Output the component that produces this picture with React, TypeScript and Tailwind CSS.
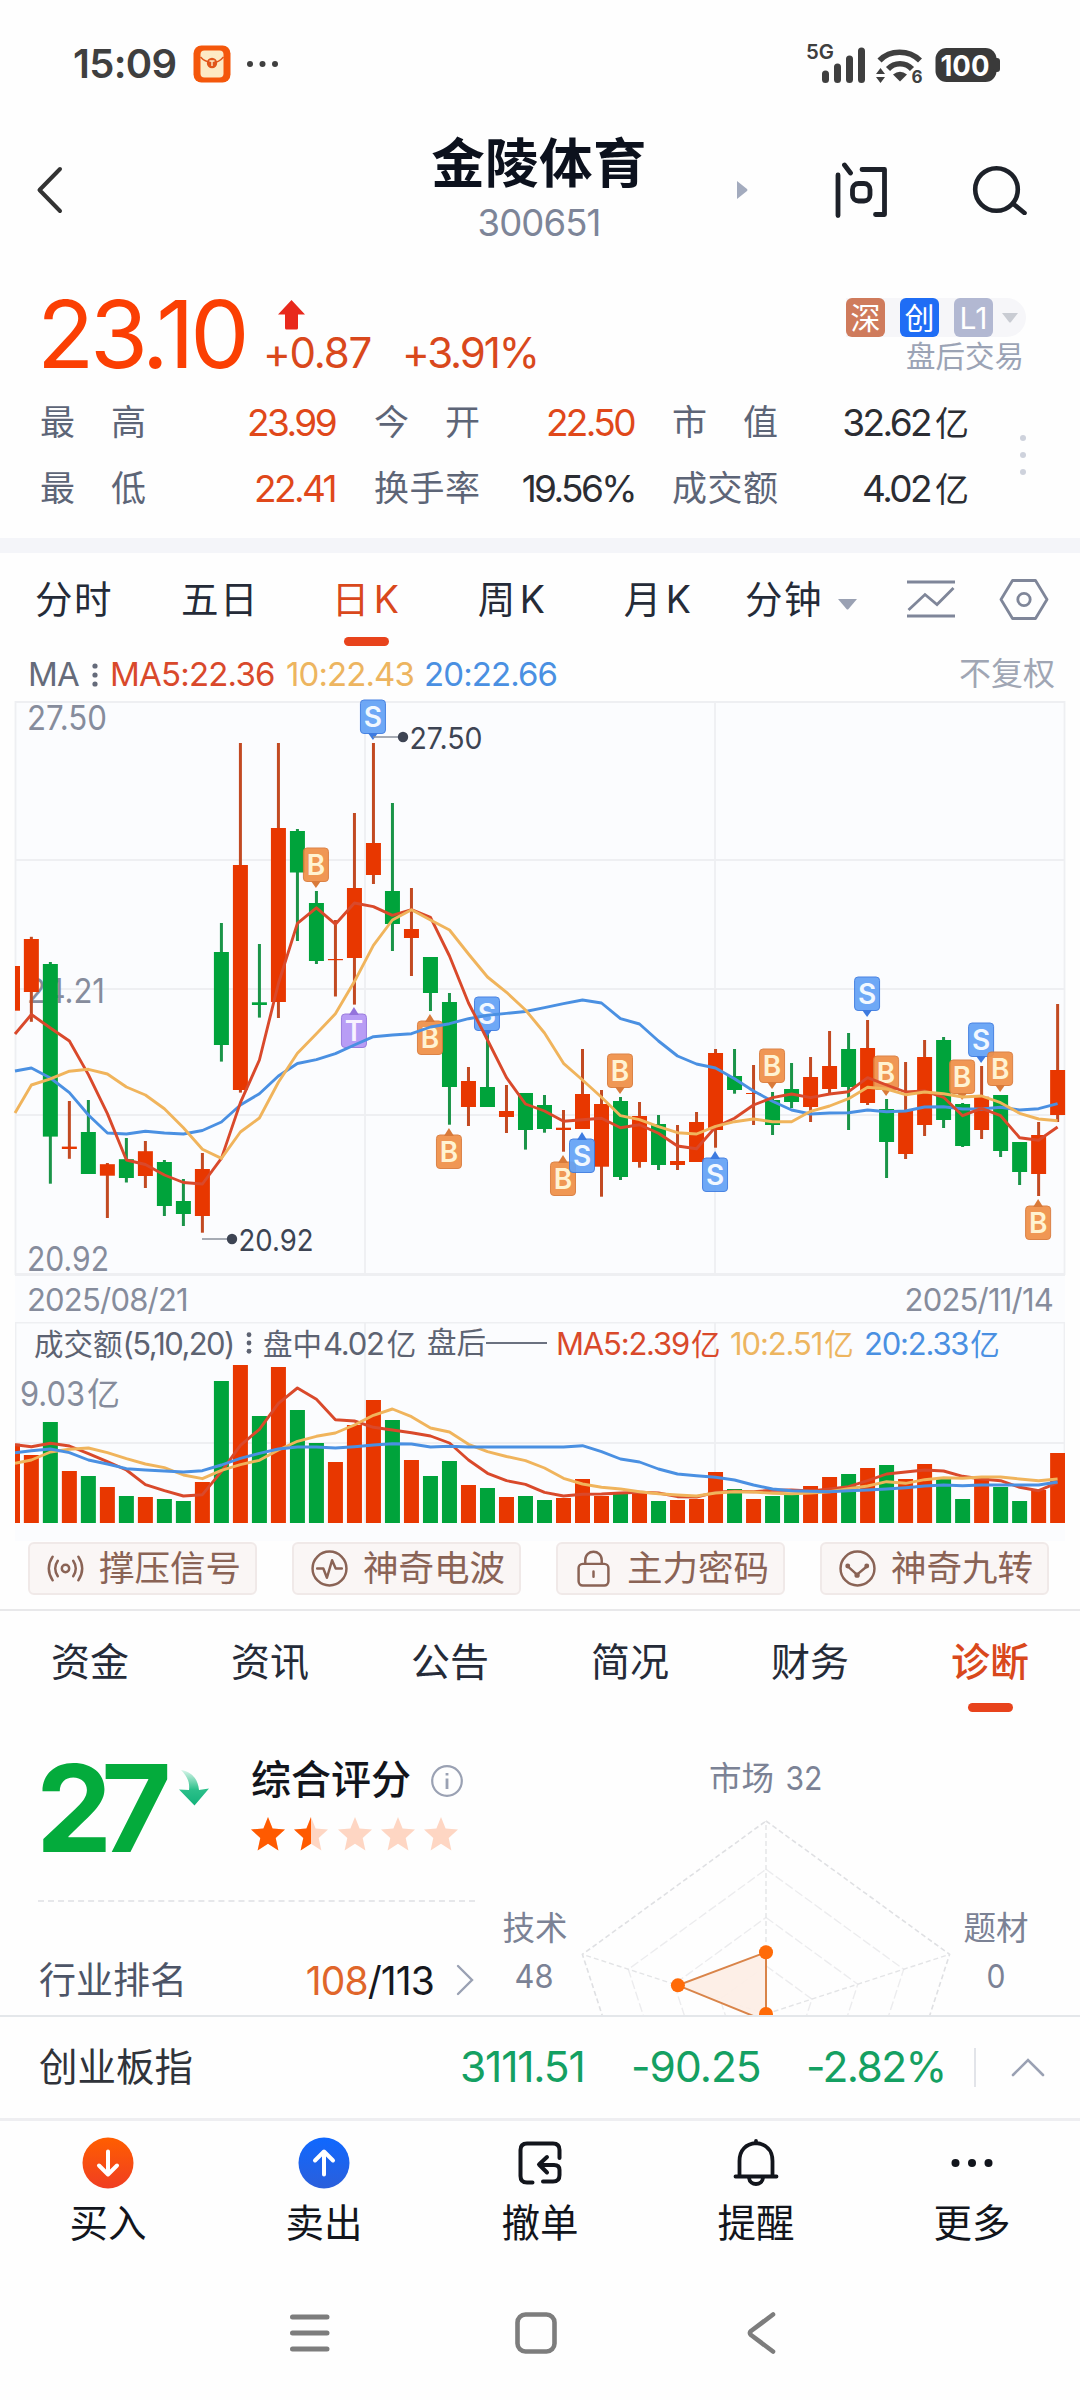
type Dir = 'up' | 'down';

interface Candle {
    dir: Dir;
    high: number;
    top: number;
    bottom: number;
    low: number;
    turnover: number;
}

interface Marker {
    index: number;
    tip: number;
    label: 'B' | 'S' | 'T';
    side: 'above' | 'below';
}

const RED = '#e83700';
const GREEN = '#00a33b';
const FONT = "Inter, 'Noto Sans CJK SC', sans-serif";
const STEP = 19.005;
const FIRST_X = 12.35;

const candleX = (i: number) => FIRST_X + STEP * i;

// direction, high, body top, body bottom, low, turnover bar top
const rows: [Dir, number, number, number, number, number][] = [
    ['up', 966, 966, 1010.7, 1010.7, 1443.7],
    ['up', 936.8, 939, 992, 1021.8, 1455],
    ['down', 962, 964, 1136.6, 1183.7, 1422],
    ['up', 1101, 1146.6, 1149, 1158.8, 1471],
    ['down', 1100, 1132, 1174, 1174, 1476],
    ['up', 1163, 1164.2, 1175.7, 1218, 1487],
    ['down', 1138, 1159.2, 1178, 1182.5, 1496],
    ['up', 1141, 1151.2, 1176, 1188, 1497],
    ['down', 1160, 1162, 1206, 1216, 1499],
    ['down', 1179, 1201, 1214, 1226, 1501],
    ['up', 1153, 1169, 1216, 1232.7, 1482],
    ['down', 923, 952, 1045, 1061.6, 1381],
    ['up', 743, 865, 1090, 1092.6, 1365],
    ['down', 944, 1002.3, 1005, 1017.6, 1416],
    ['up', 743, 828, 1002, 1018, 1367],
    ['down', 829, 831, 872.5, 941, 1410],
    ['down', 891, 903, 961, 964, 1443],
    ['up', 920, 959, 960.2, 996.5, 1462],
    ['up', 813, 888, 958, 1004.6, 1425],
    ['up', 743, 843, 875, 884, 1400],
    ['down', 803, 891, 924, 951, 1420],
    ['up', 888, 929, 938, 976, 1460],
    ['down', 957, 957, 993, 1011, 1476],
    ['down', 993, 1002, 1087, 1124.7, 1461],
    ['up', 1067, 1081, 1107, 1126, 1485],
    ['down', 1034, 1087, 1107, 1107, 1488],
    ['up', 1085, 1111, 1117, 1133, 1497],
    ['down', 1093, 1093, 1130, 1149.6, 1496],
    ['down', 1095, 1105, 1129, 1132.7, 1500],
    ['up', 1110, 1127.7, 1130, 1151.7, 1498],
    ['up', 1049, 1094, 1129, 1129, 1479],
    ['up', 1090, 1104, 1166.7, 1196.7, 1496],
    ['down', 1097, 1101, 1177, 1180, 1493],
    ['up', 1102, 1116, 1162, 1167.7, 1493],
    ['down', 1115, 1124, 1165, 1170, 1501],
    ['up', 1125, 1161, 1165, 1170, 1500],
    ['up', 1112, 1122, 1162, 1162, 1499],
    ['up', 1049, 1053, 1130, 1147.7, 1472],
    ['down', 1049, 1076, 1090, 1093.7, 1489],
    ['up', 1065, 1093, 1094, 1125, 1499],
    ['down', 1092, 1100, 1125, 1135, 1496],
    ['down', 1063, 1089, 1102, 1108, 1495],
    ['up', 1057, 1077, 1107, 1122, 1486],
    ['up', 1031, 1066, 1089, 1093, 1477],
    ['down', 1033, 1049, 1087, 1130, 1474],
    ['up', 1020, 1048, 1103, 1105, 1468],
    ['down', 1099, 1109, 1142, 1178, 1465],
    ['up', 1062, 1110.7, 1154, 1159, 1479],
    ['up', 1040, 1057, 1125, 1136, 1464],
    ['down', 1037, 1040, 1120, 1128, 1479],
    ['down', 1103, 1104, 1146, 1147, 1499],
    ['up', 1066, 1096.7, 1130, 1139, 1478],
    ['down', 1095, 1095, 1151, 1157, 1487],
    ['down', 1142, 1142, 1172, 1185, 1501],
    ['up', 1122, 1135, 1174, 1196, 1490],
    ['up', 1004, 1070, 1115, 1122, 1453],
];

const candles: Candle[] = rows.map(([dir, high, top, bottom, low, turnover]) => ({ dir, high, top, bottom, low, turnover }));

const priceMa = [
    {
        color: '#4a90e2',
        values: [1071, 1068, 1078, 1092.6, 1115, 1133, 1134, 1131.3, 1133, 1134, 1130.5, 1122, 1105, 1093.7, 1076, 1063.5, 1059.7, 1053.6, 1045, 1036.7, 1035, 1033.7, 1027, 1023.7, 1018.7, 1015.3, 1013.4, 1011.5, 1007.7, 1003.7, 1000, 1003, 1018.7, 1024, 1041, 1056, 1064, 1068, 1078.7, 1091, 1101.3, 1110, 1114, 1113, 1112.7, 1110, 1111.7, 1111, 1107, 1106.7, 1109, 1109, 1107.3, 1110, 1108.7, 1103.7],
    },
    {
        color: '#d9492b',
        values: [1034, 1014.5, 1028, 1041, 1074.6, 1113.6, 1160, 1164.5, 1175, 1182.5, 1184, 1158.4, 1102.6, 1060, 983.5, 923.4, 907.8, 924.2, 903, 906.6, 915.4, 909.7, 917.3, 956, 1003, 1040, 1077.7, 1104, 1111, 1121.3, 1119.7, 1118.3, 1127.7, 1124.7, 1133.3, 1146, 1148.7, 1127, 1118.3, 1105, 1097.7, 1094, 1097.7, 1094, 1091.7, 1077.7, 1085, 1092, 1091, 1097.3, 1115.7, 1108.3, 1115.7, 1137.7, 1140.3, 1127],
    },
    {
        color: '#f0b45c',
        values: [1113, 1085, 1078.8, 1071.2, 1069.3, 1074, 1087, 1095, 1108.7, 1127.8, 1149.3, 1158.4, 1132, 1118, 1082.3, 1053.2, 1033.7, 1013.8, 981.6, 945.3, 920, 909.7, 920, 930, 954, 977, 992.3, 1010, 1033, 1063.3, 1080, 1097.3, 1115.7, 1119.7, 1126.7, 1132.7, 1134, 1126.3, 1121.7, 1119, 1121.7, 1121.7, 1111.3, 1106, 1098.7, 1087.3, 1089, 1094.7, 1092, 1093.7, 1097, 1096, 1102.7, 1113.3, 1119, 1120.7],
    },
];

const turnoverMa = [
    {
        color: '#d9492b',
        values: [1444.7, 1446.7, 1443.3, 1446, 1453.7, 1461.7, 1470, 1484.7, 1490.7, 1496, 1494.7, 1471.7, 1445.3, 1429.3, 1403.3, 1388, 1399.3, 1419.7, 1421, 1427.3, 1430, 1432.7, 1436, 1443, 1460, 1473.3, 1480.7, 1484.3, 1492.3, 1496, 1494.3, 1494, 1493, 1492.3, 1493, 1496.7, 1497, 1492.3, 1491.3, 1491.7, 1490.3, 1490, 1491, 1489, 1486.7, 1480.7, 1474, 1472, 1470, 1471, 1476.3, 1479, 1480.7, 1487.3, 1490.7, 1482.7],
    },
    {
        color: '#f0b45c',
        values: [1463.3, 1460, 1452, 1449.3, 1448, 1452.7, 1458.7, 1464, 1467.7, 1475, 1478.7, 1470.3, 1464.7, 1460.3, 1450, 1441.3, 1436.3, 1433, 1425, 1415.3, 1409, 1416.7, 1428, 1432, 1444.3, 1451.7, 1456.5, 1460.7, 1468, 1478.3, 1484, 1487.3, 1489, 1491.7, 1493.7, 1495, 1496, 1493, 1491.7, 1492, 1493.3, 1493.7, 1493, 1491.7, 1488.7, 1486, 1481.7, 1483.3, 1479.7, 1477.7, 1478.3, 1477, 1477, 1479, 1480.7, 1479],
    },
    {
        color: '#4a90e2',
        values: [1452.7, 1450.7, 1449, 1452.7, 1460, 1464, 1468.7, 1470, 1471, 1472, 1470.7, 1465, 1458.3, 1453.3, 1449, 1447, 1447, 1448, 1446.7, 1445, 1443.7, 1444, 1447, 1446.3, 1447, 1447, 1447, 1447, 1447, 1447, 1445.7, 1451.7, 1459, 1462, 1469, 1474, 1475.7, 1477.3, 1480, 1485, 1489, 1490.7, 1491.3, 1491.7, 1490.7, 1490, 1489, 1487.7, 1486, 1485, 1485.7, 1485, 1485, 1485, 1485, 1482],
    },
];

const markers: Marker[] = [
    { index: 16, tip: 888, label: 'B', side: 'above' },
    { index: 18, tip: 1007, label: 'T', side: 'below' },
    { index: 19, tip: 740, label: 'S', side: 'above' },
    { index: 22, tip: 1014, label: 'B', side: 'below' },
    { index: 23, tip: 1128, label: 'B', side: 'below' },
    { index: 25, tip: 1037, label: 'S', side: 'above' },
    { index: 29, tip: 1155, label: 'B', side: 'below' },
    { index: 30, tip: 1132, label: 'S', side: 'below' },
    { index: 32, tip: 1094, label: 'B', side: 'above' },
    { index: 37, tip: 1151, label: 'S', side: 'below' },
    { index: 40, tip: 1089, label: 'B', side: 'above' },
    { index: 45, tip: 1017, label: 'S', side: 'above' },
    { index: 46, tip: 1096, label: 'B', side: 'above' },
    { index: 50, tip: 1100, label: 'B', side: 'above' },
    { index: 51, tip: 1063, label: 'S', side: 'above' },
    { index: 52, tip: 1092, label: 'B', side: 'above' },
    { index: 54, tip: 1199, label: 'B', side: 'below' },
];

const markerColors = {
    B: { fill: '#f09048', stroke: '#d97a3a', text: '#fff3d2' },
    S: { fill: '#64a2f6', stroke: '#3d7be0', text: '#f2f8ff' },
    T: { fill: '#b496f5', stroke: '#9473dc', text: '#f7f2ff' },
};

function MarkerTag({ index, tip, label, side }: Marker) {
    const x = candleX(index) - 0.5;
    const { fill, stroke, text } = markerColors[label];
    const top = side === 'above' ? tip - 40 : tip + 7;
    const base = side === 'above' ? tip - 7 : tip + 8;
    return (
        <g>
            <rect x={x - 12.5} y={top} width={25} height={33.5} rx={3.5} fill={fill} stroke={stroke} strokeWidth={1} opacity={0.93} />
            <path d={`M${x - 5} ${base}L${x} ${tip}L${x + 5} ${base}Z`} fill={stroke} />
            <text x={x} y={top + 26.5} textAnchor="middle" fontFamily={FONT} fontSize={28} fontWeight={600} fill={text}>{label}</text>
        </g>
    );
}

function MaLine({ color, values }: { color: string; values: number[] }) {
    const points = values.map((y, i) => `${Math.max(15, candleX(i)).toFixed(1)},${y}`).join(' ');
    return <polyline points={points} fill="none" stroke={color} strokeWidth={2.9} strokeLinejoin="round" />;
}

function ChartText({ x, y, size, width, fill, children }: { x: number; y: number; size: number; width: number; fill: string; children: string }) {
    return (
        <text x={x} y={y} fontFamily={FONT} fontSize={size} fill={fill} textLength={width} lengthAdjust="spacingAndGlyphs">{children}</text>
    );
}

function PriceChart() {
    return (
        <svg className="block w-[1050px] h-[574px] overflow-visible" viewBox="15 701 1050 574">
            <rect x={15} y={701} width={1050} height={574} fill="#fbfcfe" />
            <path d="M15 702H1065M15 860H1065M15 989H1065M15 1115H1065M15 1274H1065M365 701V1275M715 701V1275M15.5 701V1275M1064.5 701V1275" stroke="#eeeff2" strokeWidth={1.8} />
            <ChartText x={27} y={730} size={34} width={80} fill="#868c9c">27.50</ChartText>
            <ChartText x={27} y={1003} size={34} width={78} fill="#868c9c">24.21</ChartText>
            <ChartText x={27} y={1271} size={34} width={82} fill="#868c9c">20.92</ChartText>
            {candles.map((c, i) => {
                const x = candleX(i);
                const color = c.dir === 'up' ? RED : GREEN;
                return (
                    <g key={i}>
                        {i > 0 && <rect x={x - 1.5} y={c.high} width={3} height={c.low - c.high} fill={c.dir === 'up' ? '#c24a22' : '#1a9448'} />}
                        <rect x={i > 0 ? x - 7.5 : 15} y={c.top} width={i > 0 ? 15 : 5} height={c.bottom - c.top} fill={color} />
                    </g>
                );
            })}
            {markers.map((m) => <MarkerTag key={m.index} {...m} />)}
            {priceMa.map((line) => <MaLine key={line.color} {...line} />)}
            <path d="M373 737H403M202 1239H232" stroke="#8b909c" strokeWidth={1.6} />
            <circle cx={403} cy={737} r={5.2} fill="#3d4453" />
            <circle cx={232} cy={1239} r={5.2} fill="#3d4453" />
            <ChartText x={409.5} y={748.5} size={30} width={73} fill="#3d4453">27.50</ChartText>
            <ChartText x={238.5} y={1250.5} size={30} width={75} fill="#3d4453">20.92</ChartText>
        </svg>
    );
}

function TurnoverChart() {
    return (
        <svg className="block w-[1050px] h-[219px]" viewBox="15 1322 1050 219">
            <rect x={15} y={1322} width={1050} height={219} fill="#fbfcfe" />
            <path d="M15 1322.5H1065M15 1443H1065M365 1322V1523M715 1322V1523M15.5 1322V1523M1064.5 1322V1523" stroke="#eeeff2" strokeWidth={1.8} />
            <ChartText x={20} y={1405.5} size={34} width={65} fill="#868c9c">9.03</ChartText>
            <ChartText x={87} y={1406} size={33} width={33} fill="#868c9c">亿</ChartText>
            {candles.map((c, i) => (
                <rect key={i} x={i > 0 ? candleX(i) - 7.5 : 15} y={c.turnover} width={i > 0 ? 15 : 5} height={1523 - c.turnover} fill={c.dir === 'up' ? RED : GREEN} />
            ))}
            {turnoverMa.map((line) => <MaLine key={line.color} {...line} />)}
        </svg>
    );
}

function StatusBar() {
    return (
        <div className="flex h-[127px] items-center pl-[73px] pr-[80px] text-[#3f3f3f]">
            <span className="w-[120px] text-[40px] font-semibold leading-none tracking-[-0.7px]">15:09</span>
            <svg className="h-[38px] w-[38px]" viewBox="0 0 38 38">
                <rect x="0.5" y="0.5" width="37" height="37" rx="8" fill="#f4570b" />
                <rect x="7.5" y="5.5" width="23" height="27" rx="4" fill="#fdeac4" />
                <path d="M7.5 12C10 15 14 17 19 17.5S28 15 30.5 12" stroke="#e0561a" strokeWidth="1.4" fill="none" />
                <circle cx="19" cy="18" r="5.2" fill="#e0561a" />
                <path d="M16.5 16H21.5M19 16V21" stroke="#fdeac4" strokeWidth="1.4" />
            </svg>
            <svg className="ml-[15px] h-[8px] w-[34px]" viewBox="0 0 34 8">
                <circle cx="4" cy="4" r="3" fill="#3f3f3f" />
                <circle cx="16.5" cy="4" r="3" fill="#3f3f3f" />
                <circle cx="29" cy="4" r="3" fill="#3f3f3f" />
            </svg>
            <svg className="ml-auto h-[48px] w-[194px] overflow-visible" viewBox="806 38 194 48">
                <text x="806" y="57" fontFamily={FONT} fontSize="20.5" fontWeight="600" fill="#3f3f3f" textLength="28" lengthAdjust="spacingAndGlyphs">5G</text>
                <path d="M825.5 72V77.5M837.5 65V77.5M849.5 57V77.5M861.5 49V77.5" stroke="#3f3f3f" strokeWidth="7" strokeLinecap="round" />
                <path d="M879.5 58.5C890 47.5 909 47.5 920 58.5" stroke="#3f3f3f" strokeWidth="5.6" fill="none" />
                <path d="M888 67C894.5 60 905.5 60 912 67" stroke="#3f3f3f" strokeWidth="5.6" fill="none" />
                <path d="M900 79.5L893 72.5Q900 67 907 72.5Z" fill="#3f3f3f" />
                <path d="M876 72L880.5 66L885 72ZM876 75L880.5 81L885 75Z" fill="#3f3f3f" />
                <text x="911.5" y="81" fontFamily={FONT} fontSize="17" fontWeight="700" fill="#3f3f3f">6</text>
                <rect x="935.5" y="46" width="61" height="34" rx="11" fill="#3a3a3a" />
                <rect x="993" y="56" width="7" height="14" rx="3" fill="#3a3a3a" />
                <text x="965" y="73.5" textAnchor="middle" fontFamily={FONT} fontSize="29" fontWeight="700" fill="#fff" textLength="49" lengthAdjust="spacingAndGlyphs">100</text>
            </svg>
        </div>
    );
}

function Header() {
    return (
        <div className="flex h-[126px] items-center pl-[36px] pr-[52px]">
            <svg className="h-[50px] w-[28px]" viewBox="0 0 28 50" fill="none" stroke="#333" strokeWidth="4" strokeLinecap="round" strokeLinejoin="round">
                <path d="M24 4L3.5 25L24 46" />
            </svg>
            <div className="ml-[350px] flex w-[250px] flex-col items-center leading-none">
                <span className="mt-[-2px] text-[53.5px] font-bold tracking-[0.4px] text-[#0c111d]">金陵体育</span>
                <span className="mt-[14px] text-[36.5px] tracking-[-0.9px] text-[#7d8598]">300651</span>
            </div>
            <svg className="ml-[73px] h-[18px] w-[11px]" viewBox="0 0 11 18">
                <path d="M0 0L10 8Q11 9 10 10L0 18Z" fill="#a3abbe" />
            </svg>
            <svg className="ml-[87px] h-[56px] w-[54px]" viewBox="835 161 54 56" fill="none" stroke="#1d2129" strokeWidth="4.8" strokeLinecap="round" strokeLinejoin="round">
                <path d="M838 174V214.5M844.5 164L850.5 172M862 168.5H884.5V213.5H875.5" />
                <rect x="852.5" y="182.5" width="17.5" height="17.5" rx="6" />
            </svg>
            <svg className="ml-[83px] h-[50px] w-[56px]" viewBox="972 165 56 50" fill="none" stroke="#1d2129" strokeWidth="4.6" strokeLinecap="round">
                <circle cx="996.5" cy="189.5" r="21.3" />
                <path d="M1013.5 204L1024.5 213" />
            </svg>
        </div>
    );
}

interface StatProps {
    label: string;
    value: string;
    unit?: string;
    red?: boolean;
    className: string;
}

function Stat({ label, value, unit, red, className }: StatProps) {
    return (
        <div className={`flex items-center justify-between ${className}`}>
            <span className="flex w-[106px] justify-between text-[35px] text-[#5d6577]">
                {label.split('').map((ch) => <span key={ch}>{ch}</span>)}
            </span>
            <span className={red ? 'text-[#e0481a]' : 'text-[#2b2d33]'}>
                <span className="text-[37px] tracking-[-2.6px]">{value}</span>
                {unit && <span className="ml-[5px] text-[34px]">{unit}</span>}
            </span>
        </div>
    );
}

function Quote() {
    return (
        <div className="h-[285px] pl-[40px] leading-none">
            <div className="flex h-[136px] items-start">
                <span className="ml-[-3px] mt-[34px] w-[226px] text-[94px] tracking-[-4.3px] text-[#fb3f03]">23.10</span>
                <div className="mt-[47px] flex flex-col">
                    <svg className="ml-[15px] h-[30px] w-[27px]" viewBox="0 0 27 30">
                        <path d="M13.5 0L27 14.5H20V28Q20 29.5 18.5 29.5H8.5Q7 29.5 7 28V14.5H0Z" fill="#e8291c" />
                    </svg>
                    <div className="mt-[2px] flex text-[42px] text-[#d9481c]">
                        <span className="w-[139px] tracking-[-1.2px]">+0.87</span>
                        <span className="tracking-[-2.1px]">+3.91%</span>
                    </div>
                </div>
                <div className="ml-auto mr-[54px] mt-[45px] flex flex-col items-end">
                    <div className="flex h-[39px] items-center gap-[15px] rounded-r-full bg-[#f6f6f9] pr-[8px] text-[30px] text-white">
                        <span className="flex h-[39px] w-[39px] items-center justify-center rounded-[6px] bg-[#cf7b5c]">深</span>
                        <span className="flex h-[39px] w-[39px] items-center justify-center rounded-[6px] bg-[#1f6df5]">创</span>
                        <span className="flex h-[39px] w-[39px] items-center justify-center rounded-[6px] bg-[#b2b8d2]">L1</span>
                        <svg className="ml-[-6px] h-[10px] w-[16px]" viewBox="0 0 16 10"><path d="M0 0H16L9 9Q8 10 7 9Z" fill="#c9ccd3" /></svg>
                    </div>
                    <span className="mr-[2px] mt-[5px] text-[29.5px] text-[#9ba3b5]">盘后交易</span>
                </div>
            </div>
            <div className="flex">
                <div className="flex flex-col">
                    <div className="flex h-[66px] items-center">
                        <Stat label="最高" value="23.99" red className="w-[295px]" />
                        <Stat label="今开" value="22.50" red className="ml-[39px] w-[260px]" />
                        <Stat label="市值" value="32.62" unit="亿" className="ml-[38px] w-[297px]" />
                    </div>
                    <div className="flex h-[66px] items-center">
                        <Stat label="最低" value="22.41" red className="w-[295px]" />
                        <Stat label="换手率" value="19.56%" className="ml-[39px] w-[261px]" />
                        <Stat label="成交额" value="4.02" unit="亿" className="ml-[37px] w-[297px]" />
                    </div>
                </div>
                <div className="ml-[51px] mt-[46px] flex flex-col gap-[11px]">
                    <i className="h-[6px] w-[6px] rounded-full bg-[#ced2dc]" />
                    <i className="h-[6px] w-[6px] rounded-full bg-[#ced2dc]" />
                    <i className="h-[6px] w-[6px] rounded-full bg-[#ced2dc]" />
                </div>
            </div>
        </div>
    );
}

function PeriodTabs() {
    const tabs = ['分时', '五日', '日K', '周K', '月K'];
    return (
        <div className="flex h-[97px] pl-px text-[37.5px] leading-none tracking-[1.5px] text-[#252b38]">
            {tabs.map((tab) => (
                <div key={tab} className={`flex w-[146px] flex-col items-center pt-[28px] ${tab === '日K' ? 'text-[#d9481c]' : ''}`}>
                    <span>{tab[0]}<span className={tab[1] === 'K' ? 'ml-[3px]' : ''}>{tab[1]}</span></span>
                    {tab === '日K' && <i className="mt-[18px] h-[9px] w-[45px] rounded-full bg-[#e8431c]" />}
                </div>
            ))}
            <span className="ml-[14px] mt-[28px]">分钟</span>
            <svg className="ml-[15px] mt-[46px] h-[11px] w-[19px]" viewBox="0 0 19 11"><path d="M0 0H19L10.5 10Q9.5 11 8.5 10Z" fill="#9aa1b3" /></svg>
            <svg className="ml-[49px] mt-[26px] h-[40px] w-[50px]" viewBox="906 579 50 40" fill="none" stroke="#7f8699" strokeWidth="3">
                <path d="M907 582H955M907 616H955" />
                <path d="M908.5 610L925 594.5L937 604.5L953.5 588" strokeWidth="2.8" />
            </svg>
            <svg className="ml-[43px] mt-[25px] h-[43px] w-[50px]" viewBox="999 578 50 43" fill="none" stroke="#7f8699" strokeWidth="2.8" strokeLinejoin="round">
                <path d="M1012.5 580.5H1035.5L1047 599.5L1035.5 618.5H1012.5L1001 599.5Z" />
                <circle cx="1024" cy="599.5" r="6.2" />
            </svg>
        </div>
    );
}

function MaLegend() {
    return (
        <div className="flex h-[51px] items-start pl-[28px] pr-[25px] pt-[8px] text-[33px] leading-none">
            <span className="w-[64px] tracking-[-0.8px] text-[#656b7a]">MA</span>
            <Colon />
            <span className="ml-[12px] w-[176px] tracking-[-0.8px] text-[#d9492b]">MA5:22.36</span>
            <span className="w-[138px] tracking-[-0.9px] text-[#edb560]">10:22.43</span>
            <span className="tracking-[-0.9px] text-[#4a90e2]">20:22.66</span>
            <span className="ml-auto text-[32px] text-[#a0a6b4]">不复权</span>
        </div>
    );
}

function Colon() {
    return (
        <svg className="mt-[5px] h-[24px] w-[6px]" viewBox="0 0 6 24">
            <circle cx="3" cy="3" r="2.6" fill="#656b7a" />
            <circle cx="3" cy="12" r="2.6" fill="#656b7a" />
            <circle cx="3" cy="21" r="2.6" fill="#656b7a" />
        </svg>
    );
}

function TurnoverLegend() {
    return (
        <div className="absolute left-[19px] top-[6px] flex text-[29.5px] leading-none text-[#5d6372]">
            <span className="w-[212px]">成交额<span className="text-[31px] tracking-[-1.6px]">(5,10,20)</span></span>
            <svg className="mt-[4px] h-[22px] w-[6px]" viewBox="0 0 6 24">
                <circle cx="3" cy="3" r="2.6" fill="#5d6372" />
                <circle cx="3" cy="12" r="2.6" fill="#5d6372" />
                <circle cx="3" cy="21" r="2.6" fill="#5d6372" />
            </svg>
            <span className="ml-[11px] w-[164px]">盘中<span className="ml-px mr-[3px] text-[31px] tracking-[-1.2px]">4.02</span>亿</span>
            <span>盘后</span>
            <i className="mt-[14px] h-[2px] w-[61px] bg-[#6b7180]" />
            <span className="ml-[9px] w-[174px] text-[#d9492b]"><span className="mr-[2px] text-[31px] tracking-[-1.2px]">MA5:2.39</span>亿</span>
            <span className="w-[134px] text-[#edb560]"><span className="mr-[2px] text-[31px] tracking-[-1.1px]">10:2.51</span>亿</span>
            <span className="text-[#4a90e2]"><span className="mr-[2px] text-[31px] tracking-[-1.2px]">20:2.33</span>亿</span>
        </div>
    );
}

const signals = [
    {
        name: '撑压信号',
        icon: (
            <>
                <circle cx="18" cy="18" r="3.6" />
                <path d="M10.5 10.5Q5.5 18 10.5 25.5M25.5 10.5Q30.5 18 25.5 25.5M5.5 6.5Q-2 18 5.5 29.5M30.5 6.5Q38 18 30.5 29.5" />
            </>
        ),
    },
    {
        name: '神奇电波',
        icon: (
            <>
                <circle cx="18" cy="18" r="16.5" />
                <path d="M6 18H12L15.5 27L20.5 10L24 18H30" />
            </>
        ),
    },
    {
        name: '主力密码',
        icon: (
            <>
                <rect x="3.5" y="13.5" width="29" height="21" rx="4" />
                <path d="M10 13V10C10 -1 26 -1 26 10V13M18 21V26" />
            </>
        ),
    },
    {
        name: '神奇九转',
        icon: (
            <>
                <circle cx="18" cy="18" r="16.5" />
                <path d="M8.5 16L17.5 24L27 16" />
                <circle cx="8.5" cy="15.5" r="1.2" fill="#8a6355" />
                <circle cx="27" cy="15.5" r="1.2" fill="#8a6355" />
                <circle cx="17.6" cy="24.5" r="1.4" fill="#8a6355" />
            </>
        ),
    },
];

function SignalPills() {
    return (
        <div className="flex h-[70px] gap-[35px] border-b-2 border-[#e8e8ea] pl-[28px] pt-px">
            {signals.map((s) => (
                <div key={s.name} className="flex h-[53px] w-[229px] items-center rounded-[6px] border-2 border-[#f0e9e8] bg-[#faf6f5] pl-[17px]">
                    <svg className="h-[37px] w-[37px] shrink-0" viewBox="0 0 36 36" fill="none" stroke="#8a6355" strokeWidth="2.4" strokeLinecap="round" strokeLinejoin="round">{s.icon}</svg>
                    <span className="ml-[15px] text-[35.5px] leading-none text-[#8a6355]">{s.name}</span>
                </div>
            ))}
        </div>
    );
}

function InfoTabs() {
    const tabs = ['资金', '资讯', '公告', '简况', '财务', '诊断'];
    return (
        <div className="grid h-[105px] grid-cols-6 text-[39px] leading-none text-[#252b38]">
            {tabs.map((tab) => (
                <div key={tab} className={`flex flex-col items-center pt-[31px] ${tab === '诊断' ? 'font-medium text-[#d9481c]' : ''}`}>
                    <span>{tab}</span>
                    {tab === '诊断' && <i className="mt-[22px] h-[9px] w-[45px] rounded-full bg-[#e8431c]" />}
                </div>
            ))}
        </div>
    );
}

const STAR = 'M17 0L21.6 11.4L34 12.6L24.7 20.9L27.4 33.5L17 26.8L6.6 33.5L9.3 20.9L0 12.6L12.4 11.4Z';

function Stars({ score }: { score: number }) {
    return (
        <div className="mt-[17px] flex gap-[9.3px]">
            {[0, 1, 2, 3, 4].map((i) => {
                const fill = Math.max(0, Math.min(1, score - i));
                return (
                    <svg key={i} className="h-[34px] w-[34px]" viewBox="0 0 34 34">
                        <path d={STAR} fill="#fed6c3" />
                        <svg x="0" y="0" width={34 * fill} height="34"><path d={STAR} fill="#ff5a00" /></svg>
                    </svg>
                );
            })}
        </div>
    );
}

function Radar() {
    const cx = 766;
    const cy = 2014;
    const R = 193;
    const point = (axis: number, value: number) => {
        const a = -Math.PI / 2 + (axis * 2 * Math.PI) / 5;
        return [cx + Math.cos(a) * R * value, cy + Math.sin(a) * R * value];
    };
    const polygon = (values: number[]) => values.map((v, i) => point(i, v).map((n) => n.toFixed(1)).join(',')).join(' ');
    const scores = [0.32, 0, 0, 0.035, 0.48];
    return (
        <svg className="block h-[300px] w-[580px]" viewBox="500 1716 580 300">
            {[0.25, 0.5, 0.75].map((r) => (
                <polygon key={r} points={polygon([r, r, r, r, r])} fill="none" stroke="#ececee" strokeWidth={1.4} strokeDasharray="9 3" />
            ))}
            <polygon points={polygon([1, 1, 1, 1, 1])} fill="none" stroke="#dfe0e3" strokeWidth={1.6} strokeDasharray="5 3" />
            {[0, 1, 2, 3, 4].map((i) => {
                const [x, y] = point(i, 1);
                return <line key={i} x1={cx} y1={cy} x2={x} y2={y} stroke="#e3e4e6" strokeWidth={1.4} strokeDasharray="5 3" />;
            })}
            <polygon points={polygon(scores)} fill="#fdeee5" fillOpacity={0.92} stroke="#d98449" strokeWidth={2} />
            {[0, 1, 4].map((i) => {
                const [x, y] = point(i, scores[i]);
                return <circle key={i} cx={x} cy={y} r={7} fill="#ff6b08" />;
            })}
            <g fontFamily={FONT} fontSize={32.5} fill="#7b8295" textAnchor="middle">
                <text x={741.5} y={1789.5}>市场</text>
                <text x={804} y={1789.5} textLength={37} lengthAdjust="spacingAndGlyphs">32</text>
                <text x={535} y={1939.5}>技术</text>
                <text x={534} y={1987.5} textLength={39} lengthAdjust="spacingAndGlyphs">48</text>
                <text x={996} y={1939.5}>题材</text>
                <text x={996} y={1987.5} textLength={19} lengthAdjust="spacingAndGlyphs">0</text>
            </g>
        </svg>
    );
}

function Diagnosis() {
    return (
        <div className="flex h-[299px] overflow-hidden leading-none">
            <div className="w-[500px] pl-[38px]">
                <div className="flex h-[184px] w-[437px] items-start">
                    <span className="ml-[-2px] mt-[32px] w-[143px] text-[121px] font-bold tracking-[-11px] text-[#04ab3c]">27</span>
                    <svg className="mt-[54px] h-[36px] w-[30px]" viewBox="0 0 30 36">
                        <defs>
                            <linearGradient id="drop" x1="0" y1="0" x2="0" y2="1">
                                <stop offset="0" stopColor="#d9f5ea" />
                                <stop offset="0.55" stopColor="#2cc08a" />
                                <stop offset="1" stopColor="#12b27a" />
                            </linearGradient>
                        </defs>
                        <path d="M2 0C13 2 19 9 20 20L30 18.5L15.5 35.5L0 19.5L10 20C11 12 8 6 2 0Z" fill="url(#drop)" />
                    </svg>
                    <div className="ml-[42px] mt-[44px]">
                        <div className="flex items-center">
                            <span className="text-[40px] font-medium text-[#12151c]">综合评分</span>
                            <svg className="ml-[19px] mt-[2px] h-[34px] w-[34px]" viewBox="0 0 34 34" fill="none" stroke="#9aa1b3" strokeWidth="2.2">
                                <circle cx="17" cy="17" r="14.8" />
                                <path d="M17 14.5V25M17 9V11.6" strokeWidth="2.8" />
                            </svg>
                        </div>
                        <Stars score={1.5} />
                    </div>
                </div>
                <div className="w-[437px] border-t-2 border-dashed border-[#e6e7ea]" />
                <div className="flex h-[156px] w-[437px] items-center">
                    <span className="ml-px text-[37px] text-[#4d5567]">行业排名</span>
                    <span className="ml-auto text-[39px] tracking-[-0.9px] text-[#16181d]"><span className="text-[#e0662a]">108</span>/113</span>
                    <svg className="ml-[22px] mr-px h-[32px] w-[18px]" viewBox="0 0 18 32" fill="none" stroke="#9aa1b3" strokeWidth="2.4" strokeLinecap="round">
                        <path d="M2 2L16 16L2 30" />
                    </svg>
                </div>
            </div>
            <Radar />
        </div>
    );
}

function IndexBar() {
    return (
        <div className="flex h-[103px] items-center border-t-2 border-[#e4e7ea] pl-[39px] leading-none text-[#14a062]">
            <span className="w-[421px] text-[38.5px] text-[#30333a]">创业板指</span>
            <span className="w-[171px] text-[42.5px] tracking-[-1.2px]">3111.51</span>
            <span className="w-[175px] text-[42.5px] tracking-[-1px]">-90.25</span>
            <span className="w-[168px] text-[42.5px] tracking-[-1.6px]">-2.82%</span>
            <i className="h-[39px] w-[2px] bg-[#e2e4e9]" />
            <svg className="ml-[35px] h-[19px] w-[34px]" viewBox="0 0 34 19" fill="none" stroke="#9aa1b3" strokeWidth="2.6" strokeLinecap="round">
                <path d="M2 17L17 2L32 17" />
            </svg>
        </div>
    );
}

const actions = [
    {
        name: '买入',
        icon: (
            <>
                <defs>
                    <linearGradient id="buy" x1="0" y1="0" x2="0" y2="1">
                        <stop offset="0" stopColor="#ff5e00" />
                        <stop offset="1" stopColor="#f03e22" />
                    </linearGradient>
                </defs>
                <circle cx="26" cy="26" r="25.5" fill="url(#buy)" />
                <path d="M26 14.5V37M17 28.5L26 37.5L35 28.5" stroke="#fff" strokeWidth="4" />
            </>
        ),
    },
    {
        name: '卖出',
        icon: (
            <>
                <defs>
                    <linearGradient id="sell" x1="0" y1="0" x2="0" y2="1">
                        <stop offset="0" stopColor="#0f68ff" />
                        <stop offset="1" stopColor="#2b5fdb" />
                    </linearGradient>
                </defs>
                <circle cx="26" cy="26" r="25.5" fill="url(#sell)" />
                <path d="M26 37.5V15M17 23.5L26 14.5L35 23.5" stroke="#fff" strokeWidth="4" />
            </>
        ),
    },
    {
        name: '撤单',
        icon: (
            <path d="M45.5 21V13Q45.5 6.5 39 6.5H13Q6.5 6.5 6.5 13V39Q6.5 45.5 13 45.5H18.5M33 20L25 27.5L33 35.5M26 28H40Q45.5 28 45.5 33V38Q45.5 44.5 39 44.5H29" stroke="#12151c" strokeWidth="4" />
        ),
    },
    {
        name: '提醒',
        icon: (
            <path d="M5.5 39.5H46.5M9.5 39V24C9.5 13 16 7 26 6C36 7 42.5 13 42.5 24V39M26 4V6M19 41C20 49 32 49 33 41" stroke="#12151c" strokeWidth="3.8" />
        ),
    },
    {
        name: '更多',
        icon: (
            <>
                <circle cx="9.5" cy="26" r="4" fill="#12151c" />
                <circle cx="26" cy="26" r="4" fill="#12151c" />
                <circle cx="42.5" cy="26" r="4" fill="#12151c" />
            </>
        ),
    },
];

function ActionBar() {
    return (
        <div className="grid h-[148px] grid-cols-5 border-t-[3px] border-[#eeeef1]">
            {actions.map((a) => (
                <div key={a.name} className="flex flex-col items-center pt-[16px]">
                    <svg className="h-[52px] w-[52px]" viewBox="0 0 52 52" fill="none" strokeLinecap="round" strokeLinejoin="round">{a.icon}</svg>
                    <span className="mt-[15px] text-[38.5px] leading-none text-[#12151c]">{a.name}</span>
                </div>
            ))}
        </div>
    );
}

function SystemNav() {
    return (
        <div className="flex h-[134px] items-start pl-[289px] pt-[44px]">
            <svg className="h-[46px] w-[42px]" viewBox="0 0 42 46" stroke="#7d7d7d" strokeWidth="5" strokeLinecap="round">
                <path d="M3.5 7H38M3.5 23H38M3.5 39H38" />
            </svg>
            <svg className="ml-[182px] h-[46px] w-[46px]" viewBox="0 0 46 46" fill="none" stroke="#7d7d7d" strokeWidth="4.6">
                <rect x="4.5" y="4.5" width="37" height="37" rx="8" />
            </svg>
            <svg className="ml-[187px] h-[46px] w-[32px]" viewBox="0 0 32 46" fill="none" stroke="#7d7d7d" strokeWidth="4.6" strokeLinecap="round" strokeLinejoin="round">
                <path d="M27 4.5L5 21Q3 23 5 25L27 41.5" />
            </svg>
        </div>
    );
}

export default function App() {
    return (
        <div className="h-[2400px] w-[1080px] overflow-hidden bg-[#fefefe] font-[Inter,'Noto_Sans_CJK_SC',sans-serif] whitespace-nowrap">
            <StatusBar />
            <Header />
            <Quote />
            <div className="h-[15px] bg-[#f4f5f9]" />
            <PeriodTabs />
            <MaLegend />
            <div className="ml-[15px] w-[1050px]">
                <PriceChart />
                <div className="flex h-[47px] items-center justify-between border-t border-[#eeeff2] bg-[#fbfcfe] pl-[12px] pr-[12px] text-[31px] leading-none tracking-[-0.8px] text-[#868c9c]">
                    <span>2025/08/21</span>
                    <span>2025/11/14</span>
                </div>
                <div className="relative">
                    <TurnoverChart />
                    <TurnoverLegend />
                </div>
            </div>
            <SignalPills />
            <InfoTabs />
            <Diagnosis />
            <IndexBar />
            <ActionBar />
            <SystemNav />
        </div>
    );
}
